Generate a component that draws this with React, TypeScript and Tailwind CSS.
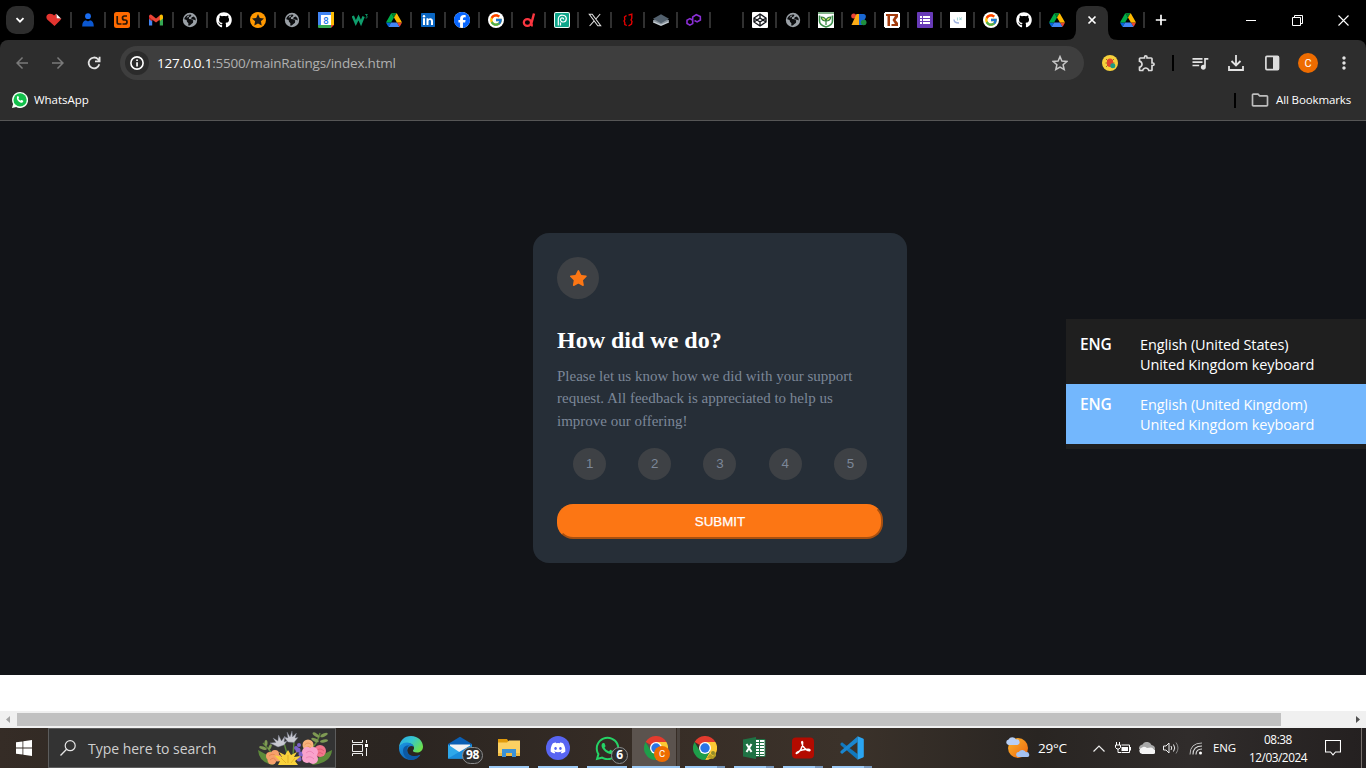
import type { ReactNode } from "react";
import { FcGoogle } from "react-icons/fc";
import { FaGithub, FaFacebook, FaDiscord, FaWhatsapp } from "react-icons/fa6";
import {
  MdOutlineExtension, MdQueueMusic, MdOutlineFolder, MdMoreVert,
  MdArrowBack, MdArrowForward,
} from "react-icons/md";

const Drive = () => (
  <svg viewBox="0 0 87.3 78" className="h-[14px] w-4">
    <path d="m6.6 66.85 3.85 6.65c.8 1.4 1.95 2.5 3.3 3.3l13.75-23.8h-27.5c0 1.55.4 3.1 1.2 4.5z" fill="#0066da" />
    <path d="m43.65 25-13.75-23.8c-1.35.8-2.5 1.9-3.3 3.3l-25.4 44a9.06 9.06 0 0 0 -1.2 4.5h27.5z" fill="#00ac47" />
    <path d="m73.55 76.8c1.35-.8 2.5-1.9 3.3-3.3l1.6-2.75 7.65-13.25c.8-1.4 1.2-2.95 1.2-4.5h-27.5l5.85 11.5z" fill="#ea4335" />
    <path d="m43.65 25 13.75-23.8c-1.35-.8-2.9-1.2-4.5-1.2h-18.5c-1.6 0-3.15.45-4.5 1.2z" fill="#00832d" />
    <path d="m59.8 53h-32.3l-13.75 23.8c1.35.8 2.9 1.2 4.5 1.2h50.8c1.6 0 3.15-.45 4.5-1.2z" fill="#4285f4" />
    <path d="m73.4 26.5-12.7-22c-.8-1.4-1.95-2.5-3.3-3.3l-13.75 23.8 16.15 28h27.45c0-1.55-.4-3.1-1.2-4.5z" fill="#ffba00" />
  </svg>
);

const Globe = () => (
  <svg viewBox="0 0 16 16" className="size-4">
    <circle cx="8" cy="8" r="7.2" fill="#9aa0a6" />
    <path d="M2.300 7.200C2.600 4.600 5 2.500 8.200 2.400L9.500 3 8.700 4.600 6.800 5.400 7 7l2.500.3 1.700 1.200-.2 2.200-1.600 1.300-1.700 1.600-1.500-.2.2-2.200L5 9.800 4.600 8z" fill="#0c0d0f" />
    <path d="m4.500 6 2.500-1.500.300-1.200-1.800.6z" fill="#9aa0a6" />
    <path d="m9.800 5.200 2-.6 1.600 1.700.4 2.200-1.600-.7-1.800-.2-1.300-1z" fill="#0c0d0f" />
  </svg>
);
const Github = () => <FaGithub className="size-4 text-white" />;
const Google = () => (
  <span className="flex size-4 items-center justify-center rounded-full bg-white">
    <FcGoogle className="size-[14px]" />
  </span>
);

const tabIcons: { icon: ReactNode; wide?: boolean }[] = [
  {
    wide: true,
    icon: (
      <svg viewBox="0 0 16 16" className="size-4">
        <path d="M8.500 14 1.200 7.600C-.8 4.600 1 1.800 4 1.800c2 0 3.200.8 4 1.800l2-1.900L11 6l4.500.6-1.500 2z" fill="#e3342f" />
        <path d="m10.300 1.800 4.700 4.700-4.200-.3z" fill="#fff" />
      </svg>
    ),
  },
  {
    wide: true,
    icon: (
      <svg viewBox="0 0 16 16" className="size-4">
        <circle cx="8" cy="4.200" r="2.900" fill="#1a6cf0" />
        <path d="M2.200 14.500c0-4 1.500-6 3.800-6.200 1.200 1.300 2.800 1.300 4 0 2.300.2 3.800 2.200 3.800 6.200z" fill="#0b57d0" />
      </svg>
    ),
  },
  {
    wide: true,
    icon: (
      <svg viewBox="0 0 16 16" className="size-4">
        <rect width="16" height="16" rx="2.500" fill="#ff6a00" />
        <path d="M3.200 4v6.200q0 1.800 1.800 1.800h2.500M13 4h-2.500Q8.500 4 8.500 6t2 2h.7q1.800 0 1.800 2t-2 2h-2.500" fill="none" stroke="#2a1606" strokeWidth="1.700" />
      </svg>
    ),
  },
  {
    wide: true,
    icon: (
      <svg viewBox="0 0 16 16" className="size-4">
        <path d="M1 4v9.500h3.200V6z" fill="#4285f4" />
        <path d="M11.800 6v7.500H15V4z" fill="#34a853" />
        <path d="m1 4 3.200 2.500v3L1 7z" fill="#c5221f" />
        <path d="M1.300 3.200Q2.500 2 4 3.200l4 3.200 4-3.200V7.500L8 10.500 4 7.500 1 4.500z" fill="#ea4335" />
        <path d="M11.800 3.200q1.500-1.200 2.900 0L15 4.500v2L11.800 9z" fill="#fbbc04" />
      </svg>
    ),
  },
  { wide: true, icon: <Globe /> },
  { wide: true, icon: <Github /> },
  {
    wide: true,
    icon: (
      <svg viewBox="0 0 16 16" className="size-4">
        <circle cx="8" cy="8" r="8" fill="#ff9800" />
        <path d="m8 2.100 1.800 3.800 4.200.5-3.100 2.900.8 4.200L8 11.500l-3.700 2 .8-4.200L2 6.400l4.200-.5z" fill="#1c1a17" />
      </svg>
    ),
  },
  { wide: true, icon: <Globe /> },
  {
    wide: true,
    icon: (
      <svg viewBox="0 0 16 16" className="size-4">
        <path d="M0 0h13v3H3v10H0z" fill="#4285f4" />
        <path d="M13 0h3v13h-3z" fill="#fbbc04" />
        <path d="M0 13h13v3H1q-1 0-1-1z" fill="#34a853" />
        <path d="M13 13h3l-3 3z" fill="#ea4335" />
        <path d="M3 3h10v10H3z" fill="#fff" />
        <text x="8" y="11.500" textAnchor="middle" fontSize="9.500" fontFamily="Roboto, sans-serif" fontWeight="500" fill="#1a73e8">8</text>
      </svg>
    ),
  },
  {
    wide: true,
    icon: (
      <svg viewBox="0 0 16 16" className="size-4">
        <path d="m.8 4 3 7 2.700-5.500 2.500 5.500 2.600-6.500" fill="none" stroke="#0f9d6c" strokeWidth="2.500" />
        <path d="M13.300 2.500h2l-1 1.500c1.500.1 1.300 2.200-.7 2" fill="none" stroke="#0f9d6c" strokeWidth=".9" />
      </svg>
    ),
  },
  { wide: true, icon: <Drive /> },
  {
    wide: true,
    icon: (
      <svg viewBox="0 0 16 16" className="size-4">
        <rect x="1" y="1" width="14" height="14" rx=".7" fill="#0a66c2" />
        <path d="M3 6.300h2V13H3zM6.500 6.300h1.900v1c1-1.700 4.600-1.700 4.600 1.700v4h-2V9.500c0-2-2.500-1.900-2.500 0V13h-2z" fill="#fff" />
        <circle cx="4" cy="4.200" r="1.200" fill="#fff" />
      </svg>
    ),
  },
  {
    wide: true,
    icon: (
      <span className="flex size-4 rounded-full bg-white">
        <FaFacebook className="size-4 text-[#0866ff]" />
      </span>
    ),
  },
  { icon: <Google /> },
  {
    icon: (
      <svg viewBox="0 0 16 16" className="size-4">
        <path d="M13 1.500 10.500 11q-.5 2.200 1.200 2.800" fill="none" stroke="#fb3640" strokeWidth="2.400" />
        <ellipse cx="6.400" cy="10.500" rx="3.600" ry="3.300" fill="none" stroke="#fb3640" strokeWidth="2.200" />
      </svg>
    ),
  },
  {
    icon: (
      <svg viewBox="0 0 16 16" className="size-4">
        <rect width="16" height="16" rx="2" fill="#e9fbf6" />
        <rect x="1" y="1" width="14" height="14" rx="1" fill="#0da58a" />
        <path d="M4.300 13.500V7C4.300 1.800 12.300 2.200 12.300 6.800c0 4.200-5.800 4-5.800.8 0-2.200 3.200-2.200 3.200 0M6.500 13.500V10.500" fill="none" stroke="#fff" strokeWidth="1.200" />
      </svg>
    ),
  },
  {
    icon: (
      <svg viewBox="0 0 16 16" className="size-4">
        <path d="M2.300 2.300h2.900l8.500 11.400h-2.900zM13.200 2 8.900 7M7.200 8.900 2.600 14" fill="none" stroke="#e0e0e0" strokeWidth="1.050" />
      </svg>
    ),
  },
  {
    icon: (
      <svg viewBox="0 0 16 16" className="size-4">
        <path d="M6.500 3.500 4.500 5l.3 2.500L4 9l.8 1.500v2l2 1M8.500 3.200l3.300-1v4L11 8l1 1.500-.5 2.500-3 2" fill="none" stroke="#e60000" strokeWidth="1.350" />
      </svg>
    ),
  },
  {
    icon: (
      <svg viewBox="0 0 16 16" className="size-4">
        <path d="m8 5.500 8 4v1L8 14 0 10.500v-1z" fill="#c4ccd2" />
        <path d="m8 4 8 4.200v.8L8 12.500 0 9v-.8z" fill="#89939c" />
        <path d="m8 2.200 8 4.500-8 4.500-8-4.500z" fill="#52606d" />
      </svg>
    ),
  },
  {
    icon: (
      <svg viewBox="0 0 16 16" className="size-4">
        <path d="M6.700 8.300 3.900 6.600 1 8.200v3.300L3.900 13.200l2.800-1.600V5l3.600-2.300 4 1.800.1 3.500-3.300 1.900-2.600-1.400" fill="none" stroke="#8b2fd6" strokeWidth="1.600" />
      </svg>
    ),
  },
  { icon: null },
  {
    icon: (
      <svg viewBox="0 0 16 16" className="size-4">
        <rect width="16" height="16" rx="1" fill="#fff" />
        <path d="m8 2 6 4v4l-6 4-6-4V6zM8 2v4M8 10v4M2 6l6 4 6-4M2 10l6-4 6 4" fill="none" stroke="#15171c" strokeWidth="1.350" />
      </svg>
    ),
  },
  { icon: <Globe /> },
  {
    icon: (
      <svg viewBox="0 0 16 16" className="size-4">
        <path d="M0 0h16v16H0z" fill="#fff" />
        <path d="M0 1h16" stroke="#2f7c3b" strokeWidth="1.200" />
        <path d="M1.500 3.500V9c0 3 3 5 6.500 6 3.500-1 6.500-3 6.500-6V3.500" fill="none" stroke="#3b8f4a" strokeWidth="1.600" />
        <path d="M8 13V9C5 9 3.500 7.500 3.200 5 6 5 7.500 6.500 8 8.500 8.500 6.500 10 5 12.800 5 12.500 7.500 11 9 8 9" fill="#d6e86f" stroke="#2f7c3b" strokeWidth="1.200" />
      </svg>
    ),
  },
  {
    icon: (
      <svg viewBox="0 0 16 16" className="size-4">
        <circle cx="2.700" cy="4" r="2.500" fill="#ea4335" />
        <path d="M5.500 2h3v11H.5z" fill="#fbab16" />
        <path d="M8 2h4.500c3 0 3 4 1 5.500 2.500 2 2 5.500-1 5.500H8z" fill="#1967d2" />
        <circle cx="12.700" cy="10.500" r="2.800" fill="#1e8e3e" />
      </svg>
    ),
  },
  {
    icon: (
      <svg viewBox="0 0 16 16" className="size-4">
        <path d="M0 0h16v16H0z" fill="#111" />
        <path d="M1 0h14v1h1v14h-1v1H1v-1H0V1h1z" fill="#fff" />
        <path d="M2 2h6.500v2H6v10H3.500V4H2zM8.500 2H14v3l-2.500 3L14 11v3H7.500v-2H11L8.500 8 11 4H8.500z" fill="#a23a0c" />
      </svg>
    ),
  },
  {
    icon: (
      <svg viewBox="0 0 16 16" className="size-4">
        <rect width="16" height="16" rx=".8" fill="#673ab7" />
        <path d="M3 4h2v2H3zM6 4h7v2H6zM3 7h2v2H3zM6 7h7v2H6zM3 10h2v2H3zM6 10h7v2H6z" fill="#fff" />
      </svg>
    ),
  },
  {
    icon: (
      <svg viewBox="0 0 16 16" className="size-4">
        <path d="M0 0h16v16H0z" fill="#fff" />
        <path d="M4 7.500c0 2.500 2 3.500 5 3.500" fill="none" stroke="#9fb2e0" strokeWidth="1.400" />
        <path d="M7.500 5.500v3M9.300 5.500 11.500 8M11.800 5.500 9.500 8" stroke="#a3d8d8" strokeWidth="1.100" />
      </svg>
    ),
  },
  { icon: <Google /> },
  { icon: <Github /> },
  { icon: <Drive /> },
];

function TabStrip() {
  return (
    <div className="flex h-10 bg-black">
      <div className="ml-[6px] mt-[6px] flex size-7 items-center justify-center rounded-[10px] bg-[#2d2d2d]">
        <svg viewBox="0 0 10 10" className="size-[10px]"><path d="m1.500 3.200 3.500 3.500 3.500-3.500" fill="none" stroke="#fff" strokeWidth="1.800" /></svg>
      </div>
      <div className="ml-1 flex">
        {tabIcons.map((tab, i) => (
          <div key={i} className={`flex items-center justify-between pl-2 ${tab.wide ? "w-[34px]" : "w-[33px]"}`}>
            <span className="flex size-4 items-center justify-center">{tab.icon}</span>
            {i < tabIcons.length - 1 && <span className="h-4 w-[2px] bg-[#303030]" />}
          </div>
        ))}
      </div>
      <svg viewBox="0 0 52 40" className="-ml-2 h-10 w-[52px] shrink-0">
        <path d="M0 40q10 0 10-10V16Q10 6 20 6h12q10 0 10 10v14q0 10 10 10z" fill="#2d2d2d" />
        <path d="m22.500 16.500 7 7M29.500 16.500l-7 7" stroke="#fff" strokeWidth="1.700" />
      </svg>
      <div className="ml-[2px] flex w-[25px] items-center justify-between">
        <Drive />
        <span className="h-4 w-[2px] bg-[#303030]" />
      </div>
      <div className="ml-2 flex w-4 items-center justify-center">
        <svg viewBox="0 0 12 12" className="size-3"><path d="M6 .8v10.400M.8 6h10.400" stroke="#fff" strokeWidth="1.700" /></svg>
      </div>
      <div className="ml-auto flex">
        <div className="flex w-[46px] items-center justify-center"><span className="h-px w-[10px] bg-white" /></div>
        <div className="flex w-[46px] items-center justify-center">
          <svg viewBox="0 0 11 11" className="size-[11px]"><path d="M.5 2.500h8v8h-8zM2.500 2.500v-2h8v8h-2" fill="none" stroke="#fff" /></svg>
        </div>
        <div className="flex w-[46px] items-center justify-center">
          <svg viewBox="0 0 11 11" className="size-[11px]"><path d="m.5.5 10 10M10.500.5l-10 10" stroke="#fff" strokeWidth="1.100" /></svg>
        </div>
      </div>
    </div>
  );
}

const Cell = ({ children }: { children: ReactNode }) => (
  <div className="flex w-9 shrink-0 items-center justify-center">{children}</div>
);

function Toolbar() {
  return (
    <div className="bg-black">
      <div className="h-[81px] rounded-t-lg border-b border-[#565656] bg-[#2d2d2d]">
        <div className="flex pt-[6px] pl-1">
          <Cell><MdArrowBack className="size-[18px] text-[#7a7a7a]" /></Cell>
          <Cell><MdArrowForward className="size-[18px] text-[#7a7a7a]" /></Cell>
          <Cell>
            <svg viewBox="0 0 14 14" className="size-[14px]"><path d="M12.300 8.300A5.400 5.400 0 1 1 11 3.200l1.300 1.400M12.600.8v4.600H8" fill="none" stroke="#e3e3e3" strokeWidth="1.800" /></svg>
          </Cell>
          <div className="ml-2 flex h-[34px] w-[964px] items-center rounded-full bg-[#3e3e3e] pr-4 pl-[5px]">
            <span className="flex size-6 items-center justify-center rounded-full bg-[#2b2b2b]">
              <svg viewBox="0 0 14 14" className="size-[14px]"><circle cx="7" cy="7" r="6.100" fill="none" stroke="#fff" strokeWidth="1.600" /><path d="M6.200 6.200h1.700v4.300H6.200zM6.200 3.500h1.700v1.600H6.200z" fill="#fff" /></svg>
            </span>
            <span className="mt-px ml-2 font-['Open_Sans',sans-serif] text-[13.500px] tracking-[-0.2px] text-[#b0b0b0]">
              <span className="text-white">127.0.0.1</span>:5500/mainRatings/index.html
            </span>
            <svg viewBox="0 0 16 16" className="ml-auto size-4"><path d="m8 1.600 1.900 4.500 4.900.4-3.700 3.200 1.100 4.800L8 12l-4.200 2.500 1.100-4.800L1.200 6.500l4.900-.4z" fill="none" stroke="#c7c7c7" strokeWidth="1.500" /></svg>
          </div>
          <div className="ml-2 flex">
            <Cell>
              <svg viewBox="0 0 16 16" className="size-4">
                <circle cx="8" cy="8" r="8" fill="#f7d13b" />
                <path d="m4 4 8 8M12 4l-8 8M3.500 8h9" stroke="#8a5a30" strokeWidth=".9" />
                <ellipse cx="8" cy="7.800" rx="3.200" ry="4.300" fill="#e0442e" />
                <circle cx="10.800" cy="10.800" r="2.500" fill="#1c9c83" />
              </svg>
            </Cell>
            <div className="ml-px flex"><Cell><MdOutlineExtension className="size-5 text-[#dcdcdc]" /></Cell></div>
            <div className="flex w-[17px] items-center justify-center pr-px"><span className="h-4 w-[2px] bg-black" /></div>
            <Cell><MdQueueMusic className="size-5 text-[#e3e3e3]" /></Cell>
            <Cell>
              <svg viewBox="0 0 16 16" className="size-4"><path d="M8 0v10.500M3.500 6 8 10.500 12.500 6M1 11v4h14v-4" fill="none" stroke="#e3e3e3" strokeWidth="1.800" /></svg>
            </Cell>
            <Cell>
              <svg viewBox="0 0 16 16" className="size-4"><rect x="1.900" y="1.400" width="12.600" height="13.200" rx="1" fill="none" stroke="#dcdcdc" strokeWidth="1.700" /><path d="M9 1h6v14H9z" fill="#dcdcdc" /></svg>
            </Cell>
            <Cell><span className="flex size-5 items-center justify-center rounded-full bg-[#ee6c00] font-[Roboto,sans-serif] text-[11px] leading-none text-white">C</span></Cell>
            <Cell><MdMoreVert className="size-5 text-[#e3e3e3]" /></Cell>
          </div>
        </div>
        <div className="flex h-10 items-center pr-[15px] pl-3 font-['Open_Sans',sans-serif] text-[11.500px] text-white">
          <WhatsappRound />
          <span className="ml-[6px] tracking-[-0.03px]">WhatsApp</span>
          <span className="ml-auto h-[15px] w-[2px] bg-black" />
          <MdOutlineFolder className="ml-[14px] size-5 text-[#bdbdbd]" />
          <span className="ml-[6px] w-[75px] tracking-[-0.12px] whitespace-nowrap">All Bookmarks</span>
        </div>
      </div>
    </div>
  );
}

const WhatsappRound = () => (
  <svg viewBox="0 0 16 16" className="size-4">
    <path d="M8 0a8 8 0 1 1-3.800 15L0 16l1.100-4A8 8 0 0 1 8 0z" fill="#f4fff6" />
    <circle cx="8.100" cy="7.900" r="6.600" fill="#12c04b" />
    <path d="M5.200 4.500c.9-.8 1.300-.3 1.800 1.300-.7.900-.6 1.100.2 2 .8.800 1.200 1 1.700.6.700-.8 1-.5 2.300.3.300 1.500-1.200 2.200-2.300 2C6.300 10 4 7 5.200 4.500z" fill="#fff" />
  </svg>
);

function RatingCard() {
  return (
    <section className="w-[374px] rounded-2xl bg-[#262e37] p-6 font-['Liberation_Serif',serif]">
      <div className="flex size-[42px] items-center justify-center rounded-full bg-[#3e4145]">
        <svg width="17" height="16" viewBox="0 0 17 16">
          <path d="m9.067.43 1.990 4.031c.112.228.33.386.58.422l4.450.647a.772.772 0 0 1 .427 1.316l-3.220 3.138a.773.773 0 0 0-.222.683l.760 4.431a.772.772 0 0 1-1.120.813l-3.980-2.092a.773.773 0 0 0-.718 0l-3.980 2.092a.772.772 0 0 1-1.119-.813l.760-4.431a.770.770 0 0 0-.222-.683L.233 6.846A.772.772 0 0 1 .661 5.530l4.449-.647a.772.772 0 0 0 .580-.422L7.680.430a.774.774 0 0 1 1.387 0Z" fill="#fc7614" />
        </svg>
      </div>
      <h1 className="mt-7 text-2xl leading-[27px] font-bold text-white">How did we do?</h1>
      <p className="mt-[10.700px] text-[15px] leading-[22.500px] text-[#7c8798]">
        Please let us know how we did with your support request. All feedback is appreciated to help us improve our offering!
      </p>
      <div className="mt-[15.800px] flex justify-around font-['Liberation_Sans',sans-serif] text-[13.330px] text-[#7c8798]">
        {[1, 2, 3, 4, 5].map((n) => (
          <button key={n} className="h-8 w-[33px] rounded-[50%] bg-[#3e4145]">{n}</button>
        ))}
      </div>
      <button className="mt-6 block h-[35px] w-full rounded-[16px] border-2 border-t-[#fc7614] border-r-[#a85010] border-b-[#a85010] border-l-[#fc7614] bg-[#fc7614] font-['Liberation_Sans',sans-serif] text-[13.330px] leading-none text-white [-webkit-text-stroke:0.25px_white]">
        SUBMIT
      </button>
    </section>
  );
}

const LanguageRow = ({ region, active }: { region: string; active?: boolean }) => (
  <div className={`flex h-[60px] pt-[11px] pl-[14px] ${active ? "bg-[#73b7fd]" : ""}`}>
    <span className="-mt-px w-[60px] text-[15.500px] font-semibold">ENG</span>
    <span>English ({region})<br />United Kingdom keyboard</span>
  </div>
);

const bars = "absolute bottom-0 left-1 h-[2px] bg-[#9cc9f5]";

function TaskItem({ children, open, split, active }: { children: ReactNode; open?: boolean; split?: boolean; active?: boolean }) {
  return (
    <div className="relative flex h-10 w-12 items-center justify-center">
      {active && <span className="absolute inset-y-0 left-0 w-11 bg-[#5b534e]" />}
      {active && <span className="absolute inset-y-0 left-[45px] w-[3px] bg-[#4b443f]" />}
      <span className="relative flex size-6 items-center justify-center">{children}</span>
      {active && <span className="absolute bottom-0 left-0 h-[2px] w-12 bg-[#9cc9f5]" />}
      {open && !active && <span className={`${bars} w-10`} />}
      {split && !active && <span className="absolute bottom-0 left-9 h-[2px] w-2 bg-[#7898bd]" />}
    </div>
  );
}

const Chrome = () => (
  <svg viewBox="0 0 24 24" className="size-6">
    <path d="M12 12 1.600 6A12 12 0 0 1 22.400 6z" fill="#e33b2e" />
    <path d="M22.400 6A12 12 0 0 1 12 24l5.200-9L12 6z" fill="#fcc934" />
    <path d="M1.600 6A12 12 0 0 0 12 24l5.200-9L12 17l-5.200-2z" fill="#1e9e4a" />
    <circle cx="12" cy="12" r="6" fill="#fff" />
    <circle cx="12" cy="12" r="4.700" fill="#2a75e6" />
  </svg>
);

const Badge = ({ children, wide }: { children: ReactNode; wide?: boolean }) => (
  <span className={`absolute top-[11px] flex h-[17px] items-center justify-center rounded-full border border-[#8c8c8c] bg-[#2d2d2d] font-['Open_Sans',sans-serif] text-[12px] leading-none font-bold tracking-[-0.3px] text-white ${wide ? "left-[14px] w-[21px]" : "left-4 w-[17px]"}`}>
    <span className="-mt-px">{children}</span>
  </span>
);

const Flowers = () => (
  <svg viewBox="0 0 74 36" className="h-9 w-[74px]">
    <path d="M0 20q1 13 16 15L9 25zM74 20q-1 13-20 15l8-9z" fill="#5d8a3a" />
    <path d="M5 13q6 6 10 12M62 3q-2 9-8 15M35 26l1-14M30 27l-4-14" fill="none" stroke="#5d8a3a" strokeWidth="1.400" />
    <g fill="#7f9a54">
      <ellipse cx="5" cy="18" rx="4" ry="1.500" transform="rotate(20 5 18)" />
      <ellipse cx="8" cy="13" rx="1.500" ry="3" />
      <ellipse cx="12" cy="17" rx="1.400" ry="3" transform="rotate(25 12 17)" />
      <ellipse cx="58" cy="5" rx="4" ry="1.600" transform="rotate(35 58 5)" />
      <ellipse cx="66" cy="5" rx="4" ry="1.600" transform="rotate(-25 66 5)" />
      <ellipse cx="57" cy="10" rx="4" ry="1.600" transform="rotate(25 57 10)" />
      <ellipse cx="66" cy="11" rx="4" ry="1.600" transform="rotate(-10 66 11)" />
    </g>
    <g fill="#c9cad2" stroke="#74788a" strokeWidth=".4">
      <path d="M20 17 12 13l6-.5-3-4.500 5 3 .5-6 3 6 3.500-5-1 6 3-1-3 4zM30 12l-4-5 4 1-1-6 3 5 2-6 .5 6 4-4-1.500 5 3-.5-4 5z" />
    </g>
    <g fill="#7c63c8"><circle cx="38" cy="18" r="2" /><circle cx="41" cy="15" r="2" /><circle cx="40" cy="20" r="2.500" /><circle cx="43" cy="24" r="2.500" /><circle cx="41" cy="29" r="2.500" /></g>
    <circle cx="50" cy="15" r="5.500" fill="#f8b27c" />
    <path d="M46.500 15q3.500-4 7 0M48 18q2.500-3 5 0" fill="none" stroke="#e58a50" strokeWidth=".7" />
    <circle cx="62" cy="21" r="6" fill="#f2758c" />
    <path d="M58 21q4-4 8 0M59 24q3-3 6 0" fill="none" stroke="#d8506c" strokeWidth=".7" />
    <g fill="#f7a06c"><circle cx="12" cy="26" r="4" /><circle cx="17" cy="24" r="4" /><circle cx="14" cy="30" r="4.500" /><circle cx="20" cy="28" r="3.500" /></g>
    <path d="M11 26q4-4 8 1M12 30q4-4 6 1" fill="none" stroke="#e27f48" strokeWidth=".7" />
    <g fill="#f9a3cc"><circle cx="49" cy="22" r="5" /><circle cx="55" cy="22" r="5" /><circle cx="49" cy="28" r="5" /><circle cx="55" cy="29" r="5" /></g>
    <path d="M48 23q4-4 8 1M48 28q4-3 8 1" fill="none" stroke="#e678ae" strokeWidth=".7" />
    <path d="m16 25 8 2-3-5 6 3 3-5 3 5 6-3-3 5 7-1-6 5 3 4H20l2-4z" fill="#f9d23c" />
    <path d="m23 28 5 5M30 25v8M37 28l-4 5" stroke="#d9a51c" strokeWidth=".7" />
  </svg>
);

function Taskbar() {
  return (
    <footer className="flex h-10 bg-[linear-gradient(90deg,#352c26_0%,#2d2722_14%,#2b2521_30%,#372d26_48%,#3b322a_62%,#292522_76%,#302c2b_87%,#242020_100%)] font-['Open_Sans',sans-serif] text-white">
      <div className="flex w-12 items-center justify-center">
        <svg viewBox="0 0 16 16" className="size-4"><path d="M0 2.300 6.500 1.400v6.100H0zM7.300 1.200 16 0v7.500H7.300zM0 8.400h6.500v6.200L0 13.700zM7.300 8.400H16V16l-8.700-1.200z" fill="#fff" /></svg>
      </div>
      <div className="flex h-10 w-72 items-center border border-[#5c5c5c] bg-[#333] pl-[11px]">
        <svg viewBox="0 0 16 16" className="size-4"><circle cx="10.200" cy="5.700" r="5" fill="none" stroke="#e6e6e6" strokeWidth="1.200" /><path d="M6.600 9.300.5 15.500" stroke="#e6e6e6" strokeWidth="1.300" /></svg>
        <span className="ml-3 w-[170px] text-[14px] tracking-[-0.03px] whitespace-nowrap text-[#cfcfcf]">Type here to search</span>
        <Flowers />
      </div>
      <div className="flex w-12 items-center justify-center">
        <svg viewBox="0 0 16 16" className="size-4"><path d="M.5 0v2.500h10V0M.5 16v-2.500h10V16M.5 4.500h10v7H.5zM14.500 0v3M14.500 8v8" fill="none" stroke="#eee" /><path d="M13 4h3v3h-3z" fill="#fff" /></svg>
      </div>
      <div className="ml-[3px] flex gap-px">
        <TaskItem>
          <svg viewBox="0 0 24 24" className="size-6">
            <defs>
              <linearGradient id="edgeTop" x1="0" y1="0" x2="1" y2=".6"><stop offset="0" stopColor="#2aa7e8" /><stop offset=".5" stopColor="#35c6d0" /><stop offset="1" stopColor="#6be04d" /></linearGradient>
              <linearGradient id="edgeLow" x1="0" y1="0" x2="1" y2="1"><stop offset="0" stopColor="#1c9be8" /><stop offset="1" stopColor="#0b4a9c" /></linearGradient>
            </defs>
            <path d="M0 11.500C.4 4.800 5.400 0 12 0c7.300 0 12 5.400 12 10.600 0 4-3 6-6 6-3.200 0-4.400-1.200-4-2 .9-1.200 1.300-2.200.9-3.600C14 8 11 7 8.500 7 4.500 7 1.500 8.800 0 11.500z" fill="url(#edgeTop)" />
            <path d="M0 11.500C1.500 8 5 6.300 8.500 6.500c3.200.2 5.500 1.800 6.300 4-3-1.500-6 0-6.500 3.500-.5 4.200 3.700 7.500 8.500 6.300 2-.5 3.800-1.500 4.600-1.600C19.300 22 16 24 12 24 5 24-.2 18.500 0 11.500z" fill="url(#edgeLow)" />
            <path d="M8 14.500c-.5-2 .4-4 2.200-4.800-3.800-.7-6.500 2-6.100 6C4.500 20 8.500 23.500 12 24c4-.2 7.500-2.500 9.400-5.300C15.500 21.500 9 20 8 14.500z" fill="#0c59a4" />
          </svg>
        </TaskItem>
        <TaskItem>
          <svg viewBox="0 0 24 24" className="size-6">
            <path d="M0 8 12 .8 24 8v14.500H0z" fill="#0a5fb4" />
            <path d="M2 8.500h20V16H2z" fill="#f3f3f3" />
            <path d="m0 8.500 12 8 12-8v14H0z" fill="#2ea8ea" />
            <path d="m24 8.500-24 14h24z" fill="#1b8ddb" />
          </svg>
          <Badge wide>98</Badge>
        </TaskItem>
        <TaskItem open>
          <svg viewBox="0 0 24 24" className="size-6">
            <path d="M1 3h9l1.500 2.500V9H1z" fill="#e19a0b" />
            <path d="M1 6.500h9l2-2h11V20H1z" fill="#fcd062" />
            <path d="M1 17h22v3H1z" fill="#f0bb42" />
            <path d="M5 13h14v8h-4v-4H9v4H5z" fill="#3c92d6" />
          </svg>
        </TaskItem>
        <TaskItem open>
          <span className="flex size-6 items-center justify-center rounded-full bg-[#5865f2]"><FaDiscord className="size-4 text-white" /></span>
        </TaskItem>
        <TaskItem open>
          <FaWhatsapp className="size-[27px] shrink-0 text-[#25d366]" />
          <Badge>6</Badge>
        </TaskItem>
        <TaskItem active>
          <Chrome />
          <span className="absolute top-[10px] left-[10px] flex size-4 items-center justify-center rounded-full bg-[#ee6c00] font-[Roboto,sans-serif] text-[9.500px] leading-none text-white">C</span>
        </TaskItem>
        <TaskItem open split>
          <Chrome />
          <svg viewBox="0 0 10 10" className="absolute right-0 bottom-0 size-[10px]"><path d="M0 8 3 4l3 2 3-4v4L6 9z" fill="#b39c24" /><circle cx="6" cy="3" r="2" fill="#8f8a2a" /></svg>
        </TaskItem>
        <TaskItem open split>
          <svg viewBox="0 0 24 24" className="size-6">
            <path d="M11 3.500h12v17H11z" fill="#fff" stroke="#1f7244" />
            <path d="M13 6.500h9M13 9.500h9M13 12.500h9M13 15.500h9M13 18.500h9M17.500 4v16" stroke="#1f7244" />
            <path d="M1 3.500 14 1v22L1 20.500z" fill="#1f7244" />
            <path d="m4.500 8 5 8M9.500 8l-5 8" stroke="#fff" strokeWidth="2" />
          </svg>
        </TaskItem>
        <TaskItem open split>
          <svg viewBox="0 0 24 24" className="size-6">
            <rect x="1" y="1.500" width="22" height="21" rx="4" fill="#b30b00" />
            <path d="M5.500 17.500C8 17 12.500 11 11.700 6.200c-.2-1-1.200-.8-1 .4C11.200 10 15 14.800 18.300 14.700c1.400-.3.700-1.500-1-1.500-4.300 0-8.500 1.200-11 2.800-1.200.8-1.300 1.600-.8 1.500z" fill="none" stroke="#fff" strokeWidth="1.400" />
          </svg>
        </TaskItem>
        <TaskItem open split>
          <svg viewBox="0 0 24 24" className="size-6">
            <path d="M.5 7.500 2 6.200 17.500 18v5.500L.5 9z" fill="#1178be" />
            <path d="M17.500.5V6L2 18 .5 16.500v-1.300z" fill="#1a86cf" />
            <path d="M17.500.300 23 2.500q.8.400.8 1.200v16.600q0 .8-.8 1.200l-5.500 2.300z" fill="#2aa5f2" />
          </svg>
        </TaskItem>
      </div>
      <div className="ml-auto flex items-center">
        <svg viewBox="0 0 24 24" className="size-6">
          <defs><linearGradient id="sun" x1="0" y1="0" x2="1" y2="1"><stop offset="0" stopColor="#fbb52a" /><stop offset="1" stopColor="#ee6510" /></linearGradient></defs>
          <circle cx="12" cy="12" r="10" fill="url(#sun)" />
          <path d="M2.500 9a2.800 2.800 0 0 1 0-5.500 4.200 4.200 0 0 1 7.500 0A2.800 2.800 0 0 1 11.500 9z" fill="#b7cff5" />
          <path d="M12.500 21a2.500 2.500 0 0 1 .3-5 4 4 0 0 1 7.200.3 2.400 2.400 0 0 1 1.500 4.700z" fill="#a3c2f3" />
        </svg>
        <span className="ml-2 w-[29px] text-[13.500px] tracking-[-0.2px] whitespace-nowrap">29°C</span>
        <svg viewBox="0 0 12 7" className="ml-[26px] h-[7px] w-3"><path d="m.5 6.500 5.500-5.500 5.500 5.500" fill="none" stroke="#eee" strokeWidth="1.200" /></svg>
        <svg viewBox="0 0 16 12" className="ml-[10px] h-3 w-4"><path d="M6.500 3h8v7.500h-8M15.500 5v3.500M1.500 0v3M4.500 0v3M.5 3h5v2.500L4 7H2L.5 5.500zM3 7v3.500h3" fill="none" stroke="#fff" /><path d="M6.500 5H13v4H6.500z" fill="#fff" /></svg>
        <svg viewBox="0 0 16 12" className="ml-2 h-3 w-4"><path d="M0 7a4 4 0 0 1 3.500-4.500 5 5 0 0 1 9 .5 4 4 0 0 1 3.500 4z" fill="#a8a8a8" /><path d="M3.200 12a3.200 3.200 0 0 1-.4-6.300Q5 3.500 8 6l4-.5q2 0 2.200 1.500a2.500 2.500 0 0 1-.2 5z" fill="#f5f5f5" /></svg>
        <svg viewBox="0 0 16 14" className="ml-2 h-[14px] w-4"><path d="M.5 5H3l3-3v10l-3-3H.5zM8 5q1.500 2 0 4M10.500 3.500q2.500 3.500 0 7" fill="none" stroke="#eee" /><path d="M13 1.500q4 5.500 0 11" fill="none" stroke="#888" /></svg>
        <svg viewBox="0 0 14 14" className="ml-[10px] size-[14px]"><circle cx="11.500" cy="12" r="1.500" fill="#fff" /><path d="M7 13.500Q7 8 13 8M4 13.500Q4 5 13 5" fill="none" stroke="#ddd" strokeWidth="1.100" /><path d="M1 13.500Q1 2 13 2" fill="none" stroke="#bbb" /></svg>
        <span className="ml-[10px] w-[23px] text-[11.500px] tracking-[-0.1px]">ENG</span>
        <span className="ml-[11px] w-[62px] text-center text-[11.800px] leading-[18px] tracking-[-0.45px] whitespace-nowrap">08:38<br />12/03/2024</span>
        <svg viewBox="0 0 16 16" className="ml-4 size-4"><path d="M.5.5h15v11.500h-5L8 14.800 5.500 12h-5z" fill="none" stroke="#fff" strokeWidth="1.100" /></svg>
        <span className="ml-5 h-10 w-px bg-[#77706c]" />
        <span className="w-1" />
      </div>
    </footer>
  );
}

export default function App() {
  return (
    <div className="relative flex h-[768px] w-[1366px] flex-col overflow-hidden bg-white">
      <TabStrip />
      <Toolbar />
      <main className="h-[554px] overflow-hidden bg-[#121418]">
        <div className="flex h-full w-[1440px] items-center justify-center">
          <RatingCard />
        </div>
      </main>
      <div className="h-9 bg-white" />
      <div className="flex h-[17px] items-center justify-between bg-[#f0f0f0]">
        <svg viewBox="0 0 17 17" className="size-[17px]"><path d="M10 5v7L6 8.500z" fill="#a3a3a3" /></svg>
        <span className="mr-auto h-[13px] w-[1264px] bg-[#c1c1c1]" />
        <svg viewBox="0 0 17 17" className="size-[17px]"><path d="M7 5v7l4-3.500z" fill="#505050" /></svg>
      </div>
      <Taskbar />
      <aside className="absolute top-[319px] right-0 h-[130px] w-[300px] bg-[#1f1f1f] pt-[5px] font-['Open_Sans',sans-serif] text-[14.500px] leading-5 tracking-[-0.1px] text-white">
        <LanguageRow region="United States" />
        <LanguageRow region="United Kingdom" active />
      </aside>
    </div>
  );
}
